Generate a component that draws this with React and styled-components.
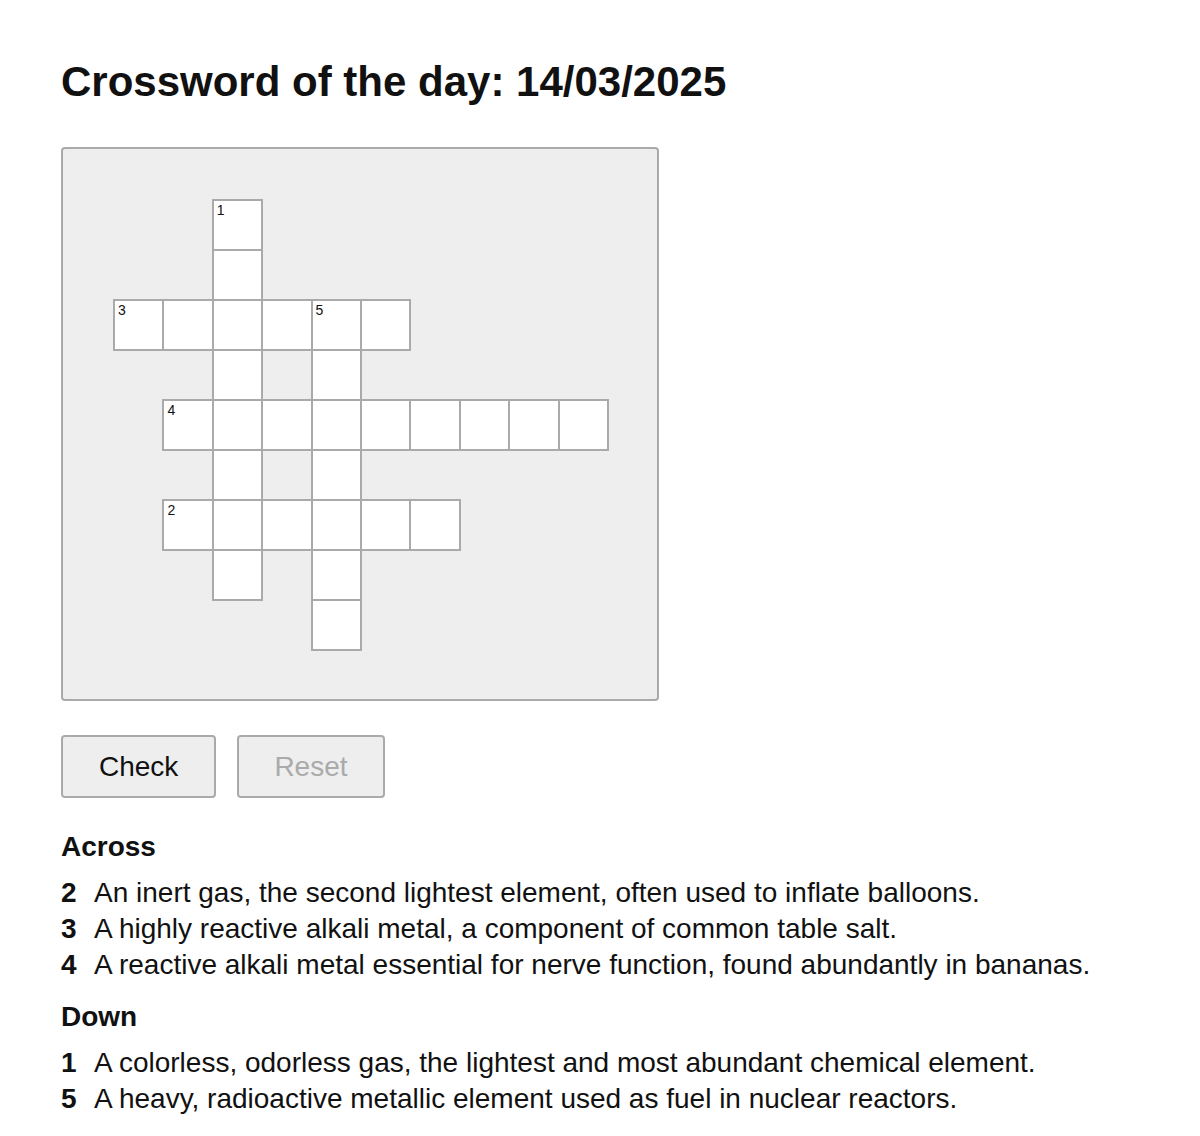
import React, { useState } from "react";
import styled, { createGlobalStyle } from "styled-components";

const WORDS = [
  { num: 1, dir: "down", row: 0, col: 2, answer: "HYDROGEN" },
  { num: 2, dir: "across", row: 6, col: 1, answer: "HELIUM" },
  { num: 3, dir: "across", row: 2, col: 0, answer: "SODIUM" },
  { num: 4, dir: "across", row: 4, col: 1, answer: "POTASSIUM" },
  { num: 5, dir: "down", row: 2, col: 4, answer: "URANIUM" },
];

const CLUES = {
  across: [
    { num: 2, text: "An inert gas, the second lightest element, often used to inflate balloons." },
    { num: 3, text: "A highly reactive alkali metal, a component of common table salt." },
    { num: 4, text: "A reactive alkali metal essential for nerve function, found abundantly in bananas." },
  ],
  down: [
    { num: 1, text: "A colorless, odorless gas, the lightest and most abundant chemical element." },
    { num: 5, text: "A heavy, radioactive metallic element used as fuel in nuclear reactors." },
  ],
};

const buildCells = () => {
  const map = {};
  WORDS.forEach((w) => {
    for (let i = 0; i < w.answer.length; i++) {
      const r = w.dir === "down" ? w.row + i : w.row;
      const c = w.dir === "across" ? w.col + i : w.col;
      const key = `${r}-${c}`;
      if (!map[key]) map[key] = { row: r, col: c, letter: w.answer[i] };
      if (i === 0) map[key].num = w.num;
    }
  });
  return Object.values(map);
};

const CELLS = buildCells();

const GlobalStyle = createGlobalStyle`
  body {
    margin: 0;
    background: #fff;
    color: #111;
    font-family: "Liberation Sans", Arial, Helvetica, sans-serif;
  }
`;

const Page = styled.main`
  padding: 58px 61px 40px;
`;

const Title = styled.h1`
  margin: 0 0 41px;
  font-size: 42px;
  line-height: 48px;
  font-weight: 700;
  color: #111;
`;

const Board = styled.div`
  box-sizing: border-box;
  width: 598px;
  padding: 50px;
  background: #eee;
  border: 2px solid #aaa;
  border-radius: 4px;
`;

const Grid = styled.div`
  display: grid;
  grid-template-columns: repeat(10, 1fr);
  grid-template-rows: repeat(9, 50px);
`;

const Cell = styled.div`
  position: relative;
  box-sizing: border-box;
  width: calc(100% + 2px);
  height: 52px;
  background: #fff;
  border: 2px solid #aaa;
`;

const CellNum = styled.span`
  position: absolute;
  top: 1px;
  left: 3px;
  font-size: 14px;
  line-height: 16px;
  color: #111;
  pointer-events: none;
`;

const CellInput = styled.input`
  box-sizing: border-box;
  width: 100%;
  height: 100%;
  border: none;
  outline: none;
  background: transparent;
  padding: 8px 0 0;
  text-align: center;
  text-transform: uppercase;
  font-family: inherit;
  font-size: 24px;
  color: ${(p) => (p.$state === "wrong" ? "#c0392b" : p.$state === "right" ? "#2e8b57" : "#111")};
`;

const Actions = styled.div`
  display: flex;
  gap: 21px;
  margin-top: 34px;
`;

const Button = styled.button`
  box-sizing: border-box;
  padding: 14px ${(p) => (p.$narrow ? "35px" : "36px")};
  font-family: inherit;
  font-size: 28px;
  line-height: 31px;
  background: #eee;
  border: 2px solid #aaa;
  border-radius: 4px;
  color: ${(p) => (p.disabled ? "#aaa" : "#111")};
  cursor: ${(p) => (p.disabled ? "default" : "pointer")};
`;

const Clues = styled.section`
  margin-top: 33px;
`;

const ClueHeading = styled.h3`
  margin: 0 0 12px;
  font-size: 28px;
  line-height: 32px;
  font-weight: 700;
  color: #111;
`;

const ClueList = styled.ul`
  list-style: none;
  margin: 0 0 18px;
  padding: 0;
`;

const ClueItem = styled.li`
  font-size: 28px;
  line-height: 36px;
  color: #111;
`;

const ClueNum = styled.b`
  display: inline-block;
  width: 33px;
`;

const App = () => {
  const [values, setValues] = useState({});
  const [checked, setChecked] = useState(false);

  const dirty = Object.values(values).some((v) => v);

  const stateOf = (cell) => {
    const v = values[`${cell.row}-${cell.col}`];
    if (!checked || !v) return "idle";
    return v.toUpperCase() === cell.letter ? "right" : "wrong";
  };

  return (
    <Page>
      <GlobalStyle />
      <Title>Crossword of the day: 14/03/2025</Title>
      <Board>
        <Grid>
          {CELLS.map((cell) => {
            const key = `${cell.row}-${cell.col}`;
            return (
              <Cell
                key={key}
                style={{ gridRow: cell.row + 1, gridColumn: cell.col + 1 }}
              >
                {cell.num && <CellNum>{cell.num}</CellNum>}
                <CellInput
                  maxLength={1}
                  value={values[key] || ""}
                  $state={stateOf(cell)}
                  onChange={(e) => {
                    setChecked(false);
                    setValues({ ...values, [key]: e.target.value });
                  }}
                />
              </Cell>
            );
          })}
        </Grid>
      </Board>
      <Actions>
        <Button onClick={() => setChecked(true)}>Check</Button>
        <Button
          $narrow
          disabled={!dirty}
          onClick={() => {
            setValues({});
            setChecked(false);
          }}
        >
          Reset
        </Button>
      </Actions>
      <Clues>
        <ClueHeading>Across</ClueHeading>
        <ClueList>
          {CLUES.across.map((c) => (
            <ClueItem key={c.num}>
              <ClueNum>{c.num}</ClueNum>
              {c.text}
            </ClueItem>
          ))}
        </ClueList>
        <ClueHeading>Down</ClueHeading>
        <ClueList>
          {CLUES.down.map((c) => (
            <ClueItem key={c.num}>
              <ClueNum>{c.num}</ClueNum>
              {c.text}
            </ClueItem>
          ))}
        </ClueList>
      </Clues>
    </Page>
  );
};

export default App;
